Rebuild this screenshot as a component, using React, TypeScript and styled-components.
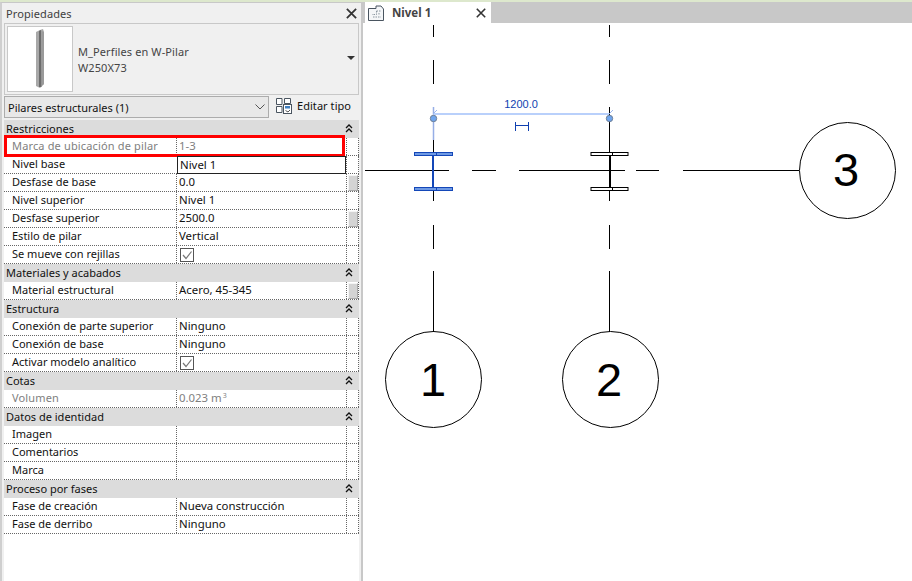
import styled, { createGlobalStyle } from "styled-components";

type RowData = {
   label: string;
   value?: string;
   checked?: boolean;
   muted?: boolean;
   editing?: boolean;
   marked?: boolean;
   thumb?: boolean;
   unit?: boolean;
};

type SectionData = {
   title: string;
   rows: RowData[];
};

const sections: SectionData[] = [
   {
      title: "Restricciones",
      rows: [
         { label: "Marca de ubicación de pilar", value: "1-3", muted: true, marked: true },
         { label: "Nivel base", value: "Nivel 1", editing: true },
         { label: "Desfase de base", value: "0.0", thumb: true },
         { label: "Nivel superior", value: "Nivel 1" },
         { label: "Desfase superior", value: "2500.0", thumb: true },
         { label: "Estilo de pilar", value: "Vertical" },
         { label: "Se mueve con rejillas", checked: true },
      ],
   },
   {
      title: "Materiales y acabados",
      rows: [{ label: "Material estructural", value: "Acero, 45-345", thumb: true }],
   },
   {
      title: "Estructura",
      rows: [
         { label: "Conexión de parte superior", value: "Ninguno" },
         { label: "Conexión de base", value: "Ninguno" },
         { label: "Activar modelo analítico", checked: true },
      ],
   },
   {
      title: "Cotas",
      rows: [{ label: "Volumen", value: "0.023 m", muted: true, unit: true }],
   },
   {
      title: "Datos de identidad",
      rows: [{ label: "Imagen" }, { label: "Comentarios" }, { label: "Marca" }],
   },
   {
      title: "Proceso por fases",
      rows: [
         { label: "Fase de creación", value: "Nueva construcción" },
         { label: "Fase de derribo", value: "Ninguno" },
      ],
   },
];

function CloseIcon({ size }: { size: number }) {
   return (
      <svg width={size} height={size} viewBox="0 0 10 10">
         <path d="M0.8 0.8 L9.2 9.2 M9.2 0.8 L0.8 9.2" stroke="#333" strokeWidth="1.6" fill="none" />
      </svg>
   );
}

function CollapseIcon() {
   return (
      <svg width="8" height="9" viewBox="0 0 8 9">
         <path d="M1 4 L4 1 L7 4 M1 8 L4 5 L7 8" stroke="#111" strokeWidth="1.3" fill="none" />
      </svg>
   );
}

function CheckBox() {
   return (
      <svg width="14" height="14" viewBox="0 0 14 14">
         <rect x="0.5" y="0.5" width="13" height="13" fill="#fff" stroke="#555" />
         <path d="M3 7 L6 10.5 L11.5 3.5" stroke="#777" strokeWidth="1.2" fill="none" />
      </svg>
   );
}

function ColumnThumb() {
   return (
      <svg width="10" height="62" viewBox="0 0 10 62">
         <path d="M1 4 L5 2 L8 1 L9 4 L9 56 L5 60 L1 58 Z" fill="#a8a8a8" />
         <path d="M4 3 L6 2 L6.5 59 L4 59 Z" fill="#6c6c6c" />
         <path d="M6.5 3 L9 4 L9 56 L6.5 58 Z" fill="#9a9a9a" />
      </svg>
   );
}

function EditTypeIcon() {
   return (
      <svg width="17" height="17" viewBox="0 0 17 17">
         <g fill="#fff" stroke="#4a5560" strokeWidth="1">
            <path d="M1.5 1.5 H7 V7.5 H1.5 Z" />
            <path d="M9.5 1.5 H15.5 V6.5 H9.5 Z" />
            <path d="M1.5 9.5 H7 V15.5 H1.5 Z" />
         </g>
         <rect x="8.5" y="7.5" width="8" height="9" fill="#fff" stroke="#4a5560" />
         <rect x="10" y="9" width="5" height="2.5" fill="#3f7fc0" />
         <path d="M10.5 13.5 L13 15 L15 13" stroke="#555" fill="none" />
      </svg>
   );
}

function TabIcon() {
   return (
      <svg width="16" height="16" viewBox="0 0 16 16">
         <path d="M0.5 3.5 H8 V1 H13 L15.5 4 V15.5 H0.5 Z" fill="#f4f6f8" stroke="#4a5560" />
         <path d="M8.5 6 H13 M8.5 6 V9.5 H4 M5 12 H13 M11 8 V10" stroke="#8a96a0" strokeDasharray="1.5 1" fill="none" />
      </svg>
   );
}

function PropertyRow({ row }: { row: RowData }) {
   return (
      <Row>
         <LabelCell $muted={row.muted}>{row.label}</LabelCell>
         <ValueCell $muted={row.muted} $editing={row.editing}>
            {row.checked ? <CheckBox /> : row.value}
            {row.unit && <sup>3</sup>}
         </ValueCell>
         <ScrollCell>{row.thumb && <Thumb />}</ScrollCell>
         {row.marked && <RedMark />}
      </Row>
   );
}

function ColumnSection({ cx, blue }: { cx: number; blue?: boolean }) {
   const stroke = blue ? "#1447b8" : "#000";
   const fill = blue ? "#6f9ae4" : "#fff";
   const half = blue ? 19 : 18.5;
   const webX = blue ? cx - 0.5 : cx + 0.5;
   return (
      <g>
         <rect x={cx - half} y="152.5" width={half * 2} height="3" fill={fill} stroke={stroke} />
         <rect x={cx - half} y="187.5" width={half * 2} height="3" fill={fill} stroke={stroke} />
         <path d={`M${webX} 155 V188`} stroke={stroke} strokeWidth="2" fill="none" />
         <path
            d={`M${cx + 3} 152.5 V155.5 M${cx + 3} 187.5 V190.5`}
            stroke={stroke}
            fill="none"
         />
      </g>
   );
}

function GridDrawing() {
   return (
      <Drawing viewBox="363 23 549 558">
         <g stroke="#000" strokeWidth="1" fill="none">
            {[433.5, 609.5].map((x) => (
               <path key={x} d={`M${x} 25 V37 M${x} 60 V84 M${x} 140 V201 M${x} 225 V249 M${x} 271 V332`} />
            ))}
            <circle cx="433.5" cy="379.5" r="48" />
            <circle cx="610.5" cy="379.5" r="48" />
            <path d="M609.5 107 V140" />
            <path d="M365 170.5 H449 M472 170.5 H496 M519 170.5 H625 M636 170.5 H659 M683 170.5 H799" />
            <circle cx="847.5" cy="170.5" r="48" />
         </g>

         <ColumnSection cx={433.5} blue />
         <ColumnSection cx={609.5} />

         <path d="M433.5 107 V140" stroke="#96aee6" strokeWidth="1.5" fill="none" />
         <path d="M433 114 H609" stroke="#b9d0fb" strokeWidth="2" fill="none" />
         <path d="M433 114 L437 110 M609 114 L613 110" stroke="#9db8ee" fill="none" />
         <circle cx="433.5" cy="118.5" r="3.2" fill="#6ea5ee" stroke="#6f7f95" />
         <circle cx="609.5" cy="118.5" r="3.2" fill="#6ea5ee" stroke="#6f7f95" />
         <path d="M515.5 122 V131 M528.5 122 V131 M516 125.5 H528" stroke="#1040b0" fill="none" />

         <DimensionText x="521" y="108" textAnchor="middle">1200.0</DimensionText>
         <BubbleText x="433" y="396" textAnchor="middle">1</BubbleText>
         <BubbleText x="609" y="396" textAnchor="middle">2</BubbleText>
         <BubbleText x="846" y="186" textAnchor="middle">3</BubbleText>
      </Drawing>
   );
}

export default function App() {
   return (
      <Page>
         <GlobalStyle />
         <SidePanel>
            <PanelTitle>
               <span>Propiedades</span>
               <CloseIcon size={11} />
            </PanelTitle>
            <TypePreview>
               <ThumbBox>
                  <ColumnThumb />
               </ThumbBox>
               <TypeName>
                  <div>M_Perfiles en W-Pilar</div>
                  <div>W250X73</div>
               </TypeName>
               <DropTriangle />
            </TypePreview>
            <FilterRow>
               <FilterSelect>
                  <span>Pilares estructurales (1)</span>
                  <svg width="10" height="6" viewBox="0 0 10 6">
                     <path d="M0.5 0.5 L5 5 L9.5 0.5" stroke="#555" fill="none" />
                  </svg>
               </FilterSelect>
               <EditType>
                  <EditTypeIcon />
                  <span>Editar tipo</span>
               </EditType>
            </FilterRow>
            <PropertyList>
               {sections.map((section) => (
                  <div key={section.title}>
                     <SectionHeader>
                        <span>{section.title}</span>
                        <CollapseIcon />
                     </SectionHeader>
                     {section.rows.map((row) => (
                        <PropertyRow key={row.label} row={row} />
                     ))}
                  </div>
               ))}
            </PropertyList>
         </SidePanel>
         <ViewArea>
            <TabBar>
               <Tab>
                  <TabIcon />
                  <TabLabel>Nivel 1</TabLabel>
                  <CloseIcon size={10} />
               </Tab>
            </TabBar>
            <GridDrawing />
         </ViewArea>
      </Page>
   );
}

const GlobalStyle = createGlobalStyle`
   html, body {
      margin: 0;
      padding: 0;
      background: #fff;
   }
   * {
      box-sizing: border-box;
   }
`;

const uiFont = `"Noto Sans", "DejaVu Sans", sans-serif`;

const Page = styled.div`
   display: flex;
   width: 912px;
   height: 581px;
   overflow: hidden;
   border-top: 2px solid #dde8cd;
   font-family: ${uiFont};
   font-size: 11px;
   color: #111;
`;

const SidePanel = styled.div`
   display: flex;
   flex-direction: column;
   flex: 0 0 363px;
   padding: 0 2px 0 2px;
   background: #f0f0f0;
   border-left: 2px solid #cfcfcf;
   border-right: 2px solid #c8c8c8;
   border-top: 1px solid #c8c8c8;
`;

const PanelTitle = styled.div`
   display: flex;
   align-items: center;
   justify-content: space-between;
   height: 20px;
   padding: 0 2px 0 2px;
   color: #404040;
   font-size: 11px;
   letter-spacing: 0.1px;
`;

const TypePreview = styled.div`
   display: flex;
   align-items: center;
   height: 72px;
   padding: 2px;
   border: 1px solid #c8c8c8;
`;

const ThumbBox = styled.div`
   display: flex;
   align-items: center;
   justify-content: center;
   flex: 0 0 66px;
   height: 66px;
   background: #fff;
   border: 1px solid #c8c8c8;
`;

const TypeName = styled.div`
   flex: 1;
   padding: 2px 0 0 5px;
   color: #444;
   font-size: 11px;
   line-height: 16px;
   letter-spacing: 0.1px;
`;

const DropTriangle = styled.div`
   width: 0;
   height: 0;
   margin: 0 1px 2px 0;
   border-left: 4px solid transparent;
   border-right: 4px solid transparent;
   border-top: 4px solid #333;
`;

const FilterRow = styled.div`
   display: flex;
   align-items: center;
   height: 22px;
   margin: 1px 0 2px;
`;

const FilterSelect = styled.div`
   display: flex;
   align-items: center;
   justify-content: space-between;
   flex: 0 0 265px;
   height: 22px;
   padding: 0 3px 0 3px;
   background: #e8e8e8;
   border: 1px solid #acacac;
   font-size: 11px;
`;

const EditType = styled.div`
   display: flex;
   align-items: center;
   gap: 5px;
   margin: -3px 0 0 6px;
   font-size: 11px;
   letter-spacing: 0.05px;
`;

const PropertyList = styled.div`
   flex: 1;
   background: #fff;
`;

const SectionHeader = styled.div`
   display: flex;
   align-items: center;
   justify-content: space-between;
   height: 18px;
   padding: 0 6px 2px 2px;
   background: #dcdcdc;
`;

const Row = styled.div`
   position: relative;
   display: grid;
   grid-template-columns: 172px 170px 13px;
   height: 18px;
   border-bottom: 1px dotted #666;
`;

const LabelCell = styled.div<{ $muted?: boolean }>`
   padding-left: 8px;
   line-height: 16px;
   white-space: nowrap;
   color: ${({ $muted }) => ($muted ? "#808080" : "#111")};
   letter-spacing: ${({ $muted }) => ($muted ? "0.15px" : "0")};
`;

const ValueCell = styled.div<{ $muted?: boolean; $editing?: boolean }>`
   display: flex;
   align-items: center;
   padding: 0 0 ${({ $editing }) => ($editing ? "1px" : "2px")} 2px;
   height: ${({ $editing }) => ($editing ? "18px" : "17px")};
   margin-left: ${({ $editing }) => ($editing ? "1px" : "0")};
   border-left: 1px dotted #666;
   border: ${({ $editing }) => ($editing ? "1px solid #222" : undefined)};
   color: ${({ $muted }) => ($muted ? "#808080" : "#111")};
   font-size: 11.4px;

   svg {
      margin: 2px 0 0 1px;
   }

   sup {
      font-size: 7px;
      line-height: 7px;
      align-self: flex-start;
      margin: 2px 0 0 1px;
   }
`;

const ScrollCell = styled.div`
   display: flex;
   justify-content: center;
   align-items: flex-end;
   border-left: 1px dotted #666;
   border-right: 1px dotted #666;
`;

const Thumb = styled.div`
   width: 10px;
   height: 16px;
   background: #d4d4d4;
   border: 1px solid #a8a8a8;
   border-top-color: #f4f4f4;
   border-left-color: #f4f4f4;
`;

const RedMark = styled.div`
   position: absolute;
   top: -3px;
   left: 0;
   width: 341px;
   height: 22px;
   border: 3px solid #f00;
   pointer-events: none;
`;

const ViewArea = styled.div`
   display: flex;
   flex-direction: column;
   flex: 1;
   min-width: 0;
`;

const TabBar = styled.div`
   flex: 0 0 21px;
   padding-left: 2px;
   background: #c8c8c8;
`;

const Tab = styled.div`
   display: flex;
   align-items: center;
   width: 126px;
   height: 21px;
   padding: 0 5px 0 3px;
   background: #fff;
`;

const TabLabel = styled.span`
   flex: 1;
   margin-left: 8px;
   font-size: 11.5px;
   font-weight: 700;
   color: #444;
`;

const Drawing = styled.svg`
   display: block;
   width: 549px;
   height: 558px;
`;

const DimensionText = styled.text`
   font-family: "Liberation Sans", Arial, sans-serif;
   font-size: 11px;
   fill: #0f3fb0;
`;

const BubbleText = styled.text`
   font-family: "Liberation Sans", Arial, sans-serif;
   font-size: 47px;
   fill: #000;
`;
